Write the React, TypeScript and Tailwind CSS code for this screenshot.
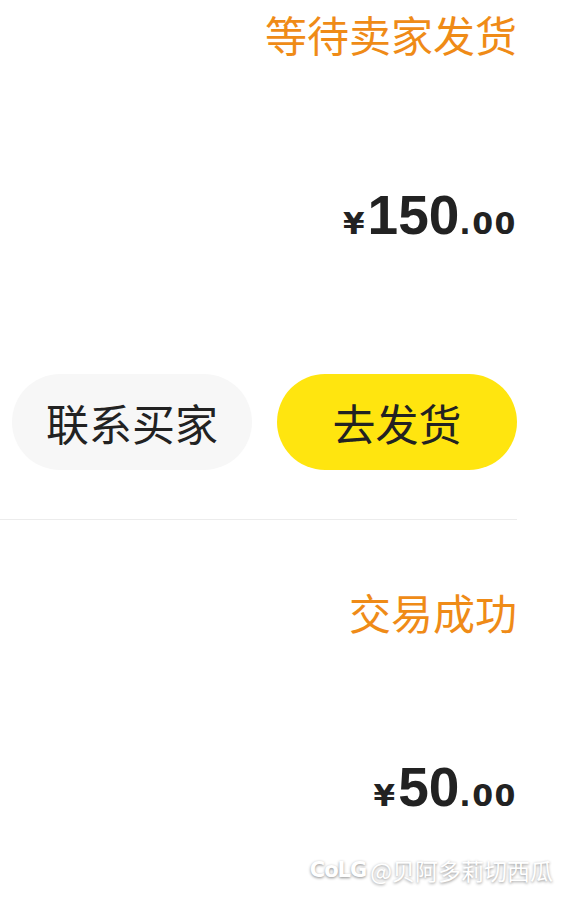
import React from 'react';

interface Order {
  status: string;
  yuan: string;
  fen: string;
  actions?: { label: string; primary?: boolean }[];
  priceGap: string;
}

const ORDERS: Order[] = [
  {
    status: '等待卖家发货',
    yuan: '150',
    fen: '.00',
    priceGap: 'mt-[120px]',
    actions: [{ label: '联系买家' }, { label: '去发货', primary: true }],
  },
  { status: '交易成功', yuan: '50', fen: '.00', priceGap: 'mt-[114px]' },
];

const CJK = "font-['Noto_Sans_CJK_SC','Noto_Sans',sans-serif]";

function Price({ yuan, fen }: { yuan: string; fen: string }) {
  return (
    <div className="flex items-baseline justify-end leading-none text-[#222]">
      <span className="font-['DejaVu_Sans',sans-serif] text-[31px] font-bold">¥</span>
      <span className="ml-[3px] font-['Liberation_Sans',Arial,sans-serif] text-[55px] font-bold">{yuan}</span>
      <span className="font-['DejaVu_Sans',sans-serif] text-[30px] font-bold tracking-[1.5px]">{fen}</span>
    </div>
  );
}

function OrderCard({ order, first }: { order: Order; first: boolean }) {
  return (
    <div className={first ? '' : 'pt-[58px]'}>
      <div className={`flex h-[68px] items-center justify-end text-[42px] leading-none text-[#ef8b17] ${CJK}`}>
        {order.status}
      </div>
      <div className={order.priceGap}>
        <Price yuan={order.yuan} fen={order.fen} />
      </div>
      {order.actions && (
        <>
          <div className="mt-[131px] flex justify-end gap-[25px]">
            {order.actions.map((a) => (
              <button
                key={a.label}
                className={`flex h-[96px] w-[240px] items-center justify-center rounded-full text-[43px] leading-none text-[#222] ${CJK} ${
                  a.primary ? 'bg-[#ffe50f]' : 'bg-[#f7f7f7]'
                }`}
              >
                {a.label}
              </button>
            ))}
          </div>
          <div className="mt-[49px] h-px bg-[#ececec]" />
        </>
      )}
    </div>
  );
}

export default function App() {
  return (
    <div className="relative h-[900px] w-[565px] overflow-hidden bg-white">
      <div className="w-[517px]">
        {ORDERS.map((o, i) => (
          <OrderCard key={o.status} order={o} first={i === 0} />
        ))}
      </div>
      {/* 水印 */}
      <div className="absolute bottom-[14px] right-[12px] flex items-center gap-[4px] text-white [text-shadow:0_1px_3px_rgba(0,0,0,0.45)]">
        <span className="font-['DejaVu_Sans',sans-serif] text-[21px] font-bold tracking-[-1px]">CoLG</span>
        <span className={`text-[23px] leading-none ${CJK}`}>@贝阿多莉切西瓜</span>
      </div>
    </div>
  );
}
